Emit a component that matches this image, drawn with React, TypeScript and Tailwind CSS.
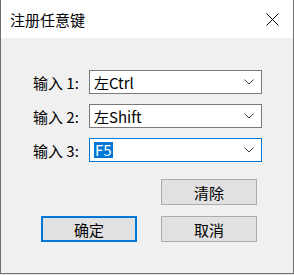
import React from "react";

const font = { fontFamily: '"Noto Sans CJK SC", "Noto Sans", sans-serif' };

function Chevron() {
  return (
    <svg width="10" height="6" viewBox="0 0 10 6" className="shrink-0">
      <path d="M0.5 0.5 L5 5 L9.5 0.5" fill="none" stroke="#404040" strokeWidth="1" />
    </svg>
  );
}

function Combo({ label, value, active }: { label: string; value: string; active?: boolean }) {
  return (
    <div className="flex items-center">
      <div className="w-[56px] text-[15px] leading-none text-black">{label}</div>
      <div
        className={
          "w-[173px] h-[24px] bg-white border flex items-center justify-between pl-[4px] pr-[7px] " +
          (active ? "border-[#0078d7]" : "border-[#7a7a7a]")
        }
      >
        {active ? (
          <span className="bg-[#0078d7] text-white text-[15px] leading-[16px] h-[16px] px-[1px]">{value}</span>
        ) : (
          <span className="text-[15px] leading-none text-black">{value}</span>
        )}
        <Chevron />
      </div>
    </div>
  );
}

function Btn({ children, primary }: { children: React.ReactNode; primary?: boolean }) {
  return (
    <button
      className={
        "w-[96px] h-[26px] bg-[#e1e1e1] flex items-center justify-center text-[15px] leading-none text-black " +
        (primary ? "border-2 border-[#0078d7]" : "border border-[#adadad]")
      }
    >
      {children}
    </button>
  );
}

export default function App() {
  return (
    <div className="w-[294px] h-[275px] bg-[#e6e6e6] flex flex-col" style={font}>
      <div className="h-[274px] border-x border-b border-[#6f6f6f] bg-[#f0f0f0] flex flex-col">
        {/* Title bar */}
        <div className="h-[38px] bg-white flex items-center justify-between pl-[9px] pr-[14px]">
          <span className="text-[15px] leading-none text-black">注册任意键</span>
          <svg width="13" height="13" viewBox="0 0 13 13">
            <path d="M0.5 0.5 L12.5 12.5 M12.5 0.5 L0.5 12.5" stroke="#000" strokeWidth="1" />
          </svg>
        </div>

        {/* Body */}
        <div className="flex flex-col pt-[32px] pl-[32px] gap-[10px]">
          <Combo label="输入 1:" value="左Ctrl" />
          <Combo label="输入 2:" value="左Shift" />
          <Combo label="输入 3:" value="F5" active />
        </div>

        <div className="flex flex-col pt-[17px] pl-[40px] gap-[11px]">
          <div className="flex justify-end w-[216px]">
            <Btn>清除</Btn>
          </div>
          <div className="flex gap-[24px]">
            <Btn primary>确定</Btn>
            <Btn>取消</Btn>
          </div>
        </div>
      </div>
    </div>
  );
}
